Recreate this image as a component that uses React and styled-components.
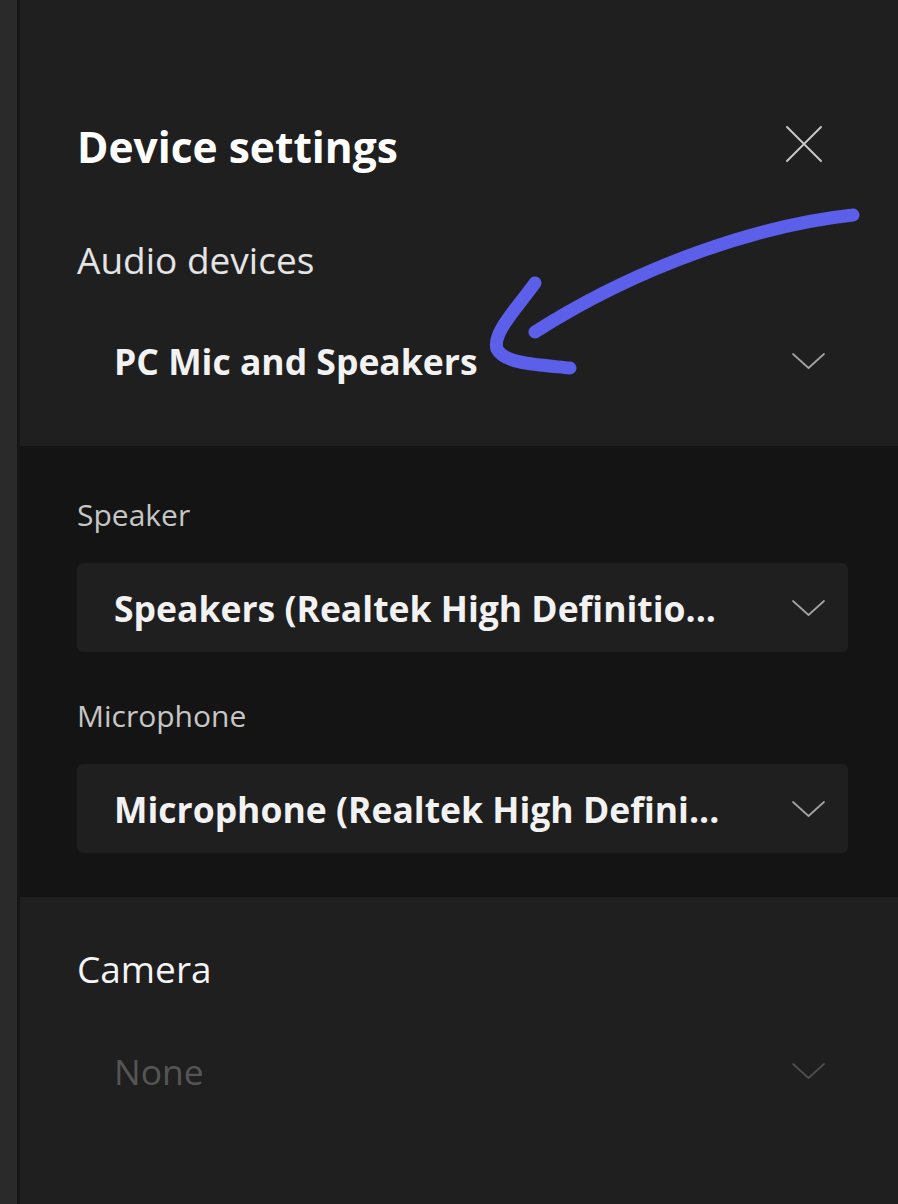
import React from "react"
import styled, { createGlobalStyle } from "styled-components"

const GlobalStyle = createGlobalStyle`
  html, body {
    margin: 0;
    padding: 0;
    background: #1f1f1f;
  }
  body {
    font-family: "Open Sans", "Noto Sans", "Liberation Sans", sans-serif;
  }
`

const Page = styled.div`
  position: relative;
  display: flex;
  width: 898px;
  height: 1204px;
  overflow: hidden;
`

const SideStrip = styled.div`
  width: 17px;
  flex-shrink: 0;
  background: #2a2a2a;
  border-right: 3px solid #161616;
`

const Panel = styled.div`
  flex: 1;
  display: flex;
  flex-direction: column;
  background: #1f1f1f;
`

const Section = styled.section`
  display: flex;
  flex-direction: column;
  padding: ${(p) => p.$pad};
  padding-left: 57px;
  padding-right: 50px;
  background: ${(p) => (p.$dark ? "#141414" : "#1f1f1f")};
`

const HeaderRow = styled.div`
  display: flex;
  align-items: center;
  justify-content: space-between;
  height: 50px;
`

const Title = styled.h1`
  margin: 0;
  font-size: 42.5px;
  line-height: 50px;
  font-weight: 700;
  color: #ffffff;
`

const CloseButton = styled.button`
  display: flex;
  align-items: center;
  justify-content: center;
  width: 40px;
  height: 40px;
  margin-right: 24px;
  margin-top: -6px;
  padding: 0;
  border: 0;
  background: transparent;
  cursor: pointer;
`

const Heading = styled.h2`
  margin: ${(p) => p.$margin || "0"};
  font-size: 37px;
  line-height: 44px;
  font-weight: 400;
  color: ${(p) => (p.$bright ? "#f4f4f4" : "#e4e4e4")};
`

const Field = styled.div`
  display: flex;
  flex-direction: column;
  gap: 30px;
  & + & {
    margin-top: 46px;
  }
`

const Label = styled.label`
  font-size: 30px;
  line-height: 36px;
  color: #c6c6c6;
`

const Dropdown = styled.div`
  display: flex;
  align-items: center;
  justify-content: space-between;
  height: 89px;
  padding: 0 22px 0 37px;
  border-radius: 6px;
  background: ${(p) => (p.$boxed ? "#1f1f1f" : "transparent")};
  margin-top: ${(p) => p.$top || "0"};
`

const Value = styled.span`
  font-size: 35.5px;
  font-weight: ${(p) => (p.$disabled ? 400 : 700)};
  color: ${(p) => (p.$disabled ? "#555555" : "#f2f2f2")};
  white-space: nowrap;
`

const Annotation = styled.svg`
  position: absolute;
  left: 0;
  top: 0;
  pointer-events: none;
`

const Chevron = ({ dim }) => (
  <svg width="35" height="18" viewBox="0 0 35 18" fill="none">
    <polyline
      points="2,2 17.5,16 33,2"
      stroke={dim ? "#4e4e4e" : "#a4a4a4"}
      strokeWidth="1.7"
      strokeLinecap="round"
      strokeLinejoin="round"
    />
  </svg>
)

const CloseIcon = () => (
  <svg width="36" height="36" viewBox="0 0 36 36" fill="none">
    <path d="M1 1 L35 35 M35 1 L1 35" stroke="#cccccc" strokeWidth="1.8" strokeLinecap="round" />
  </svg>
)

const App = () => (
  <Page>
    <GlobalStyle />
    <SideStrip />
    <Panel>
      <Section $pad="122px 0 41px">
        <HeaderRow>
          <Title>Device settings</Title>
          <CloseButton aria-label="Close">
            <CloseIcon />
          </CloseButton>
        </HeaderRow>
        <Heading $margin="66px 0 0">Audio devices</Heading>
        <Dropdown $top="34px">
          <Value>PC Mic and Speakers</Value>
          <Chevron />
        </Dropdown>
      </Section>

      <Section $dark $pad="51px 0 44px">
        <Field>
          <Label>Speaker</Label>
          <Dropdown $boxed>
            <Value>Speakers (Realtek High Definitio...</Value>
            <Chevron />
          </Dropdown>
        </Field>
        <Field>
          <Label>Microphone</Label>
          <Dropdown $boxed>
            <Value>Microphone (Realtek High Defini...</Value>
            <Chevron />
          </Dropdown>
        </Field>
      </Section>

      <Section $pad="50px 0 0">
        <Heading $bright>Camera</Heading>
        <Dropdown $top="35px">
          <Value $disabled>None</Value>
          <Chevron dim />
        </Dropdown>
      </Section>
    </Panel>

    <Annotation width="898" height="1204" viewBox="0 0 898 1204" fill="none">
      <g stroke="#5b5fea" strokeWidth="13" strokeLinecap="round" strokeLinejoin="round">
        <path d="M853 215 C 760 225, 640 265, 535 332" />
        <path d="M535 283 C 517 308, 492 333, 497 349 C 504 364, 540 365, 570 368" />
      </g>
    </Annotation>
  </Page>
)

export default App
